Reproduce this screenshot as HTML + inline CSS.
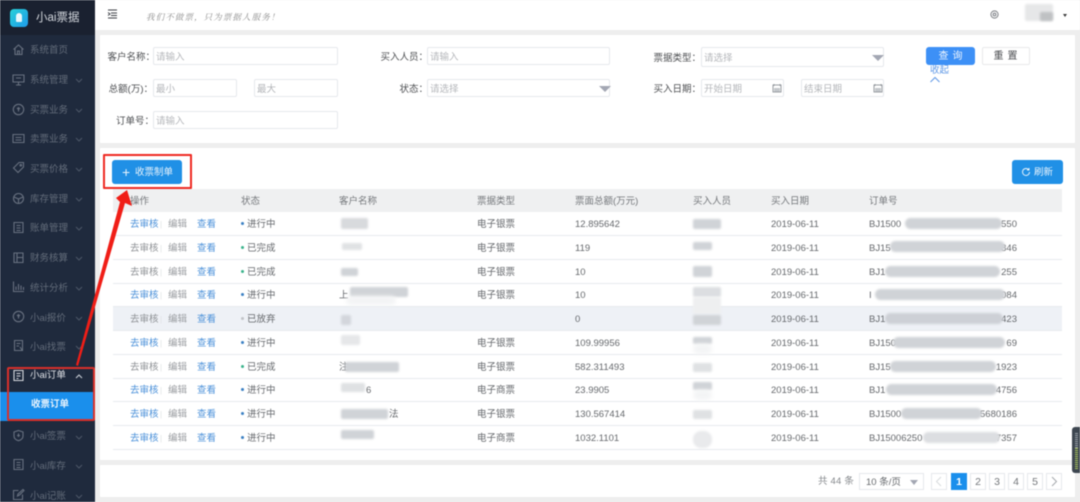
<!DOCTYPE html>
<html lang="zh">
<head>
<meta charset="utf-8">
<style>
*{box-sizing:border-box;margin:0;padding:0}
html,body{width:1080px;height:502px;overflow:hidden;background:#eeeeee}
body{position:relative;font-family:"Liberation Sans","Noto Sans CJK SC",sans-serif;font-size:9.5px;color:#5f6266}
#w{position:absolute;left:0;top:0;width:1080px;height:502px;filter:blur(.4px)}
.a,.a *{position:absolute}
.a{left:0;top:0}
.t{position:absolute;white-space:nowrap}
.panel{position:absolute;background:#fff}
.side{position:absolute;left:0;top:0;width:95px;height:502px;background:#1f2a3d}
.logo{position:absolute;left:0;top:0;width:95px;height:35px;background:#1a2130}
.m{position:absolute;left:30px;margin-top:2px;color:#636c7a;font-size:9.5px;line-height:14px;white-space:nowrap}
.i{position:absolute;left:12px;width:13px;height:13px;fill:none;stroke:#687180;stroke-width:1.1}
.ch{position:absolute;left:75px;width:8px;height:5px;fill:none;stroke:#4c5666;stroke-width:1.1}
.in{position:absolute;height:18px;border:1px solid #e6e8ec;border-radius:2px;background:#fff;color:#b4b6ba;font-size:9.5px;line-height:19px;padding-left:2px;white-space:nowrap}
.lb{position:absolute;text-align:right;font-size:9.5px;color:#4d4f52;line-height:21px;white-space:nowrap}
.tri{position:absolute;width:0;height:0;border-left:6px solid transparent;border-right:6px solid transparent;border-top:6px solid #a3a7b3}
.th{position:absolute;top:189px;line-height:25px;color:#75787c;white-space:nowrap}
.r{position:absolute;left:113px;width:949px;height:24px;border-bottom:1px solid #e7eaee;line-height:23px;white-space:nowrap;color:#66696d}
.r span{position:absolute;top:1px}
.l{color:#4a90d9}.g{color:#8e9195}.e{color:#9a9da1}
.sp{color:#dfe1e4;font-size:8px}
.o1{left:17px}.o2{left:55px}.o3{left:84px}.s1{left:47px}.s2{left:49px}
.d{position:absolute;left:128px;top:10px;width:3px;height:3px;border-radius:50%}
.st{left:134px}.cu{left:226px}.ty{left:364px}.am{left:462px}.dt{left:658px}.od{left:756px}.ode{right:45px}
.b{position:absolute;background:#d0d3d7;filter:blur(1.1px);border-radius:2px}
.b2{position:absolute;background:#f3f4f5;filter:blur(2px);border-radius:6px}
.pg{position:absolute;top:473px;width:16px;height:17px;border:1px solid #e6e8ec;text-align:center;line-height:17px;font-size:10.5px;color:#74777b;background:#fff}
</style>
</head>
<body>
<div id="w">
<div class="panel" style="left:95px;top:0;width:985px;height:30px"></div>
<svg class="a" style="left:107px;top:8px" width="12" height="12" viewBox="0 0 12 12" fill="none" stroke="#3b3f45" stroke-width="1"><path d="M1 2h9M4 5h6M4 8h0M1 10h9M4 7.5h6M1 4.5l2 1.5-2 1.5"/></svg>
<div class="t" style="left:146px;top:10px;font:italic 8.5px/14px 'Noto Serif CJK SC',serif;letter-spacing:1.1px;color:#8c8c8c">我们不做票，只为票据人服务！</div>
<svg class="a" style="left:990px;top:10px" width="9" height="9" viewBox="0 0 9 9" fill="none" stroke="#7c7f84" stroke-width="1"><circle cx="4.5" cy="4.5" r="3.6"/><circle cx="4.5" cy="4.5" r="1.4"/></svg>
<div class="b" style="left:1025px;top:4px;width:28px;height:17px;background:#e6e7e8"></div>
<div class="b" style="left:1040px;top:12px;width:13px;height:9px;background:#bfc1c3"></div>
<div class="a" style="left:1063px;top:14px;width:0;height:0;border-left:2.5px solid transparent;border-right:2.5px solid transparent;border-top:3px solid #3a3a3a"></div>

<!-- sidebar -->
<div class="side"></div>
<div class="logo"></div>
<div class="a" style="left:10px;top:9px;width:18px;height:18px;border-radius:4px;background:linear-gradient(135deg,#27d1d8,#1f9bea)"></div>
<div class="a" style="left:16px;top:13px;width:6px;height:9px;border-radius:3px 3px 1px 1px;background:#e8f7fb"></div>
<div class="t" style="left:36px;top:10px;color:#d4d8de;font-size:11.5px;line-height:16px">小ai票据</div>

<svg class="i" style="top:43px" viewBox="0 0 13 13"><path d="M1.5 6.5 6.5 2l5 4.500M3 5.500V11.500h7V5.500M5.500 11.500V8h2v3.500"/></svg>
<div class="m" style="top:42px">系统首页</div>
<svg class="i" style="top:73px" viewBox="0 0 13 13"><path d="M1 2h11v7H1zM6.500 9v3M4 12h5M4 5h5"/></svg>
<div class="m" style="top:72px">系统管理</div>
<svg class="ch" style="top:78px" viewBox="0 0 8 5"><path d="M1 1l3 3 3-3"/></svg>
<svg class="i" style="top:103px" viewBox="0 0 13 13"><circle cx="6.500" cy="6.500" r="5.200"/><path d="M6.500 4v4.500M5 5l1.500 1.500L8 5"/></svg>
<div class="m" style="top:102px">买票业务</div>
<svg class="ch" style="top:108px" viewBox="0 0 8 5"><path d="M1 1l3 3 3-3"/></svg>
<svg class="i" style="top:132px" viewBox="0 0 13 13"><path d="M1 2.500h11v8H1zM3.500 5.500h6M3.500 8h6"/></svg>
<div class="m" style="top:131px">卖票业务</div>
<svg class="ch" style="top:137px" viewBox="0 0 8 5"><path d="M1 1l3 3 3-3"/></svg>
<svg class="i" style="top:161px" viewBox="0 0 13 13"><path d="M7 1.500h4.500V6L6 11.500 1.500 7z"/><circle cx="8.800" cy="4.200" r=".8"/></svg>
<div class="m" style="top:161px">买票价格</div>
<svg class="ch" style="top:167px" viewBox="0 0 8 5"><path d="M1 1l3 3 3-3"/></svg>
<svg class="i" style="top:192px" viewBox="0 0 13 13"><circle cx="6.500" cy="6.500" r="5"/><path d="M2 5l4.500 2L11 5M6.500 7v4.500"/></svg>
<div class="m" style="top:191px">库存管理</div>
<svg class="ch" style="top:197px" viewBox="0 0 8 5"><path d="M1 1l3 3 3-3"/></svg>
<svg class="i" style="top:221px" viewBox="0 0 13 13"><path d="M2 1.500h9v10H2zM4.500 4.500h4M4.500 7h4M4.500 9.500h4"/></svg>
<div class="m" style="top:220px">账单管理</div>
<svg class="ch" style="top:226px" viewBox="0 0 8 5"><path d="M1 1l3 3 3-3"/></svg>
<svg class="i" style="top:251px" viewBox="0 0 13 13"><path d="M2 2h9v9.500H2zM5 2v9.500M5 6.500h6"/></svg>
<div class="m" style="top:250px">财务核算</div>
<svg class="ch" style="top:256px" viewBox="0 0 8 5"><path d="M1 1l3 3 3-3"/></svg>
<svg class="i" style="top:280px" viewBox="0 0 13 13"><path d="M1.500 1.500v10h10.500M4 10V6.500M6.500 10V4M9 10V5.500M11.500 10V7"/></svg>
<div class="m" style="top:280px">统计分析</div>
<svg class="ch" style="top:286px" viewBox="0 0 8 5"><path d="M1 1l3 3 3-3"/></svg>
<svg class="i" style="top:310px" viewBox="0 0 13 13"><circle cx="6.500" cy="6.500" r="5.200"/><path d="M6.500 4v4.500M5 5l1.500 1.500L8 5"/></svg>
<div class="m" style="top:310px">小ai报价</div>
<svg class="ch" style="top:316px" viewBox="0 0 8 5"><path d="M1 1l3 3 3-3"/></svg>
<svg class="i" style="top:339px" viewBox="0 0 13 13"><path d="M2.500 1.500h8v10h-8zM4.500 4.500h4M4.500 7h2.500M8 8l2 3"/></svg>
<div class="m" style="top:339px">小ai找票</div>
<svg class="ch" style="top:345px" viewBox="0 0 8 5"><path d="M1 1l3 3 3-3"/></svg>

<svg class="i" style="top:369px;stroke:#d6d9de" viewBox="0 0 13 13"><path d="M2 1.500h9v10H2zM4.500 4.500h4M4.500 7h4M4.500 9.500h2"/></svg>
<div class="m" style="top:367px;color:#dfe2e7">小ai订单</div>
<svg class="ch" style="top:374px;stroke:#c9ced6" viewBox="0 0 8 5"><path d="M1 4l3-3 3 3"/></svg>
<div class="a" style="left:0;top:392px;width:94px;height:29px;background:#1a8fec"></div>
<div class="m" style="left:31px;top:396px;color:#e9f4fd;font-weight:bold">收票订单</div>
<svg class="i" style="top:429px" viewBox="0 0 13 13"><path d="M6.500 1.500l4.500 1.500v4c0 2.500-2 4-4.500 4.700C4 11 2 9.500 2 7V3zM6.500 4.500v3.500M5 6.500h3"/></svg>
<div class="m" style="top:428px">小ai签票</div>
<svg class="ch" style="top:435px" viewBox="0 0 8 5"><path d="M1 1l3 3 3-3"/></svg>
<svg class="i" style="top:458px" viewBox="0 0 13 13"><path d="M2 1.500h9v10H2zM4.500 4.500h4M4.500 7h4M4.500 9.500h4"/></svg>
<div class="m" style="top:458px">小ai库存</div>
<svg class="ch" style="top:464px" viewBox="0 0 8 5"><path d="M1 1l3 3 3-3"/></svg>
<svg class="i" style="top:488px" viewBox="0 0 13 13"><path d="M10.500 6.500v5h-9v-9h5M5.500 8l.5-2L11 1.500l1 1L7.500 7z"/></svg>
<div class="m" style="top:488px">小ai记账</div>
<svg class="ch" style="top:494px" viewBox="0 0 8 5"><path d="M1 1l3 3 3-3"/></svg>

<!-- filter panel -->
<div class="panel" style="left:100px;top:35px;width:975px;height:108px"></div>
<div class="lb" style="left:100px;width:55px;top:47px">客户名称：</div>
<div class="in" style="left:153px;top:47px;width:185px">请输入</div>
<div class="lb" style="left:100px;width:53px;top:79px">总额(万)：</div>
<div class="in" style="left:153px;top:79px;width:84px">最小</div>
<div class="in" style="left:254px;top:79px;width:84px">最大</div>
<div class="lb" style="left:100px;width:54px;top:111px">订单号：</div>
<div class="in" style="left:153px;top:111px;width:185px">请输入</div>
<div class="lb" style="left:370px;width:58px;top:47px">买入人员：</div>
<div class="in" style="left:427px;top:47px;width:183px">请输入</div>
<div class="lb" style="left:370px;width:58px;top:79px">状态：</div>
<div class="in" style="left:427px;top:79px;width:183px">请选择</div>
<div class="tri" style="left:599px;top:86px"></div>
<div class="lb" style="left:640px;width:61px;top:48px">票据类型：</div>
<div class="in" style="left:701px;top:47px;width:183px;height:20px;line-height:21px">请选择</div>
<div class="tri" style="left:872px;top:55px"></div>
<div class="lb" style="left:640px;width:61px;top:79px">买入日期：</div>
<div class="in" style="left:701px;top:79px;width:83px">开始日期</div>
<div class="in" style="left:801px;top:79px;width:83px">结束日期</div>
<svg class="a" style="left:772px;top:83px" width="10" height="10" viewBox="0 0 10 10"><path d="M1 2h8v7H1z" fill="none" stroke="#9a9ea3"/><path d="M2 1v2M8 1v2" stroke="#9a9ea3"/><rect x="2" y="5" width="6" height="3.500" fill="#c4c7cb"/></svg>
<svg class="a" style="left:873px;top:83px" width="10" height="10" viewBox="0 0 10 10"><path d="M1 2h8v7H1z" fill="none" stroke="#9a9ea3"/><path d="M2 1v2M8 1v2" stroke="#9a9ea3"/><rect x="2" y="5" width="6" height="3.500" fill="#c4c7cb"/></svg>
<div class="a" style="left:926px;top:47px;width:49px;height:18px;border-radius:3px;background:#3d90f6;color:#eef5fe;font-size:10px;line-height:20px;text-align:center;letter-spacing:4px;padding-left:4px">查询</div>
<div class="a" style="left:982px;top:47px;width:48px;height:18px;border-radius:2px;border:1px solid #e8e9eb;background:#fff;color:#4a4c50;font-size:10px;line-height:18px;text-align:center;letter-spacing:4px;padding-left:3px">重置</div>
<div class="t" style="left:930px;top:64px;color:#5f98e6;font-size:9.5px;line-height:13px">收起</div>
<svg class="a" style="left:929px;top:76px" width="12" height="7" viewBox="0 0 12 7" fill="none" stroke="#5f98e6" stroke-width="1"><path d="M1.500 6 6 1.500 10.500 6"/></svg>

<!-- table panel -->
<div class="panel" style="left:100px;top:148px;width:975px;height:312px"></div>
<div class="a" style="left:112px;top:160px;width:70px;height:24px;border-radius:3px;background:#2090e6;color:#e8f3fc;font-size:9.500px;line-height:26px;white-space:nowrap"><span style="left:10px;top:0;font-size:14px;line-height:24px">+</span><span style="left:23px;top:0">收票制单</span></div>
<div class="a" style="left:1012px;top:160px;width:51px;height:24px;border-radius:3px;background:#2090e6;color:#e8f3fc;font-size:9.500px;line-height:26px;white-space:nowrap"><span style="left:22px;top:0">刷新</span></div>
<svg class="a" style="left:1021px;top:167px" width="10" height="10" viewBox="0 0 10 10" fill="none" stroke="#e8f3fc" stroke-width="1"><path d="M8.500 5A3.500 3.500 0 1 1 7.500 2.500M8 1v2H6"/></svg>

<div class="a" style="left:113px;top:189px;width:949px;height:23px;background:#eff0f1"></div>
<div class="th" style="left:130px">操作</div>
<div class="th" style="left:241px">状态</div>
<div class="th" style="left:339px">客户名称</div>
<div class="th" style="left:477px">票据类型</div>
<div class="th" style="left:575px">票面总额(万元)</div>
<div class="th" style="left:693px">买入人员</div>
<div class="th" style="left:771px">买入日期</div>
<div class="th" style="left:869px">订单号</div>

<div class="r" style="top:212px"><span class="o1 l">去审核</span><span class="s1 sp">|</span><span class="o2 e">编辑</span><span class="o3 l">查看</span><i class="d" style="background:#3b80c4"></i><span class="st">进行中</span><span class="ty">电子银票</span><span class="am">12.895642</span><span class="dt">2019-06-11</span><span class="od">BJ1500</span><span class="ode">550</span></div>
<div class="r" style="top:236px"><span class="o1 g">去审核</span><span class="s1 sp">|</span><span class="o2 e">编辑</span><span class="o3 l">查看</span><i class="d" style="background:#3bb48c"></i><span class="st">已完成</span><span class="ty">电子银票</span><span class="am">119</span><span class="dt">2019-06-11</span><span class="od">BJ15</span><span class="ode">846</span></div>
<div class="r" style="top:260px"><span class="o1 g">去审核</span><span class="s1 sp">|</span><span class="o2 e">编辑</span><span class="o3 l">查看</span><i class="d" style="background:#3bb48c"></i><span class="st">已完成</span><span class="ty">电子银票</span><span class="am">10</span><span class="dt">2019-06-11</span><span class="od">BJ1</span><span class="ode">255</span></div>
<div class="r" style="top:283px"><span class="o1 l">去审核</span><span class="s1 sp">|</span><span class="o2 e">编辑</span><span class="o3 l">查看</span><i class="d" style="background:#3b80c4"></i><span class="st">进行中</span><span class="cu">上</span><span class="ty">电子银票</span><span class="am">10</span><span class="dt">2019-06-11</span><span class="od">I</span><span class="ode">084</span></div>
<div class="r" style="top:307px;background:#eef1f6"><span class="o1 g">去审核</span><span class="s1 sp">|</span><span class="o2 e">编辑</span><span class="o3 l">查看</span><i class="d" style="background:#c2c4c8"></i><span class="st">已放弃</span><span class="am">0</span><span class="dt">2019-06-11</span><span class="od">BJ1</span><span class="ode">423</span></div>
<div class="r" style="top:331px"><span class="o1 l">去审核</span><span class="s1 sp">|</span><span class="o2 e">编辑</span><span class="o3 l">查看</span><i class="d" style="background:#3b80c4"></i><span class="st">进行中</span><span class="ty">电子银票</span><span class="am">109.99956</span><span class="dt">2019-06-11</span><span class="od">BJ150</span><span class="ode">69</span></div>
<div class="r" style="top:355px"><span class="o1 g">去审核</span><span class="s1 sp">|</span><span class="o2 e">编辑</span><span class="o3 l">查看</span><i class="d" style="background:#3bb48c"></i><span class="st">已完成</span><span class="cu">注</span><span class="ty">电子银票</span><span class="am">582.311493</span><span class="dt">2019-06-11</span><span class="od">BJ15</span><span class="ode">1923</span></div>
<div class="r" style="top:378px"><span class="o1 l">去审核</span><span class="s1 sp">|</span><span class="o2 e">编辑</span><span class="o3 l">查看</span><i class="d" style="background:#3b80c4"></i><span class="st">进行中</span><span class="cu" style="left:253px">6</span><span class="ty">电子商票</span><span class="am">23.9905</span><span class="dt">2019-06-11</span><span class="od">BJ1</span><span class="ode">4756</span></div>
<div class="r" style="top:402px"><span class="o1 l">去审核</span><span class="s1 sp">|</span><span class="o2 e">编辑</span><span class="o3 l">查看</span><i class="d" style="background:#3b80c4"></i><span class="st">进行中</span><span class="cu" style="left:276px">法</span><span class="ty">电子银票</span><span class="am">130.567414</span><span class="dt">2019-06-11</span><span class="od">BJ1500</span><span class="ode">5680186</span></div>
<div class="r" style="top:426px"><span class="o1 l">去审核</span><span class="s1 sp">|</span><span class="o2 e">编辑</span><span class="o3 l">查看</span><i class="d" style="background:#3b80c4"></i><span class="st">进行中</span><span class="ty">电子商票</span><span class="am">1032.1101</span><span class="dt">2019-06-11</span><span class="od">BJ15006250</span><span class="ode">7357</span></div>

<!-- redaction smudges: customer -->
<div class="b" style="left:341px;top:218px;width:27px;height:11px;background:#d8dadd"></div>
<div class="b" style="left:342px;top:243px;width:20px;height:7px;background:#e0e2e4"></div>
<div class="b" style="left:341px;top:268px;width:17px;height:8px"></div>
<div class="b" style="left:350px;top:287px;width:58px;height:10px"></div>
<div class="b2" style="left:346px;top:296px;width:50px;height:9px"></div>
<div class="b" style="left:341px;top:315px;width:10px;height:10px;background:#d3d6dc"></div>
<div class="b" style="left:341px;top:335px;width:19px;height:10px;background:#e6e7e9"></div>
<div class="b" style="left:345px;top:362px;width:54px;height:10px"></div>
<div class="b" style="left:341px;top:383px;width:24px;height:9px;background:#dfe1e3"></div>
<div class="b" style="left:341px;top:409px;width:47px;height:10px"></div>
<div class="b" style="left:341px;top:430px;width:33px;height:9px"></div>
<!-- buyer -->
<div class="b" style="left:693px;top:219px;width:28px;height:10px"></div>
<div class="b" style="left:693px;top:242px;width:19px;height:8px"></div>
<div class="b" style="left:693px;top:266px;width:19px;height:11px"></div>
<div class="b" style="left:693px;top:287px;width:28px;height:10px;background:#dcdee1"></div>
<div class="b" style="left:693px;top:297px;width:28px;height:17px;background:#eeeff0"></div>
<div class="b" style="left:693px;top:315px;width:28px;height:10px"></div>
<div class="b" style="left:693px;top:337px;width:19px;height:7px"></div>
<div class="b2" style="left:693px;top:344px;width:19px;height:10px"></div>
<div class="b" style="left:693px;top:363px;width:19px;height:9px;background:#dfe1e3"></div>
<div class="b" style="left:693px;top:382px;width:19px;height:8px"></div>
<div class="b2" style="left:693px;top:390px;width:19px;height:10px"></div>
<div class="b" style="left:693px;top:410px;width:19px;height:9px;background:#dfe1e3"></div>
<div class="b" style="left:693px;top:431px;width:19px;height:17px;background:#e9eaec;border-radius:8px"></div>
<!-- order -->
<div class="b" style="left:905px;top:218px;width:97px;height:11px;border-radius:6px"></div>
<div class="b" style="left:890px;top:241px;width:115px;height:11px;border-radius:6px"></div>
<div class="b" style="left:885px;top:266px;width:115px;height:11px;border-radius:6px"></div>
<div class="b" style="left:875px;top:289px;width:130px;height:11px;border-radius:6px"></div>
<div class="b" style="left:885px;top:313px;width:118px;height:11px;border-radius:6px;background:#cdd0d6"></div>
<div class="b" style="left:893px;top:337px;width:112px;height:11px;border-radius:6px"></div>
<div class="b" style="left:890px;top:361px;width:106px;height:11px;border-radius:6px"></div>
<div class="b" style="left:886px;top:384px;width:111px;height:11px;border-radius:6px"></div>
<div class="b" style="left:901px;top:408px;width:81px;height:11px;border-radius:6px"></div>
<div class="b" style="left:923px;top:432px;width:77px;height:11px;border-radius:6px;background:#dcdee1"></div>

<!-- pagination -->
<div class="panel" style="left:100px;top:465px;width:975px;height:32px"></div>
<div class="t" style="left:818px;top:475px;line-height:14px;color:#85888c;letter-spacing:.2px">共 44 条</div>
<div class="a" style="left:859px;top:473px;width:65px;height:17px;border:1px solid #e6e8ec;background:#fff;color:#66696d;line-height:17px;padding-left:6px;white-space:nowrap">10 条/页</div>
<div class="tri" style="left:910px;top:480px;border-left-width:4.500px;border-right-width:4.500px;border-top-width:5px"></div>
<div class="pg" style="left:931px"></div>
<svg class="a" style="left:935px;top:476px" width="8" height="11" viewBox="0 0 8 11" fill="none" stroke="#d8dadd" stroke-width="1"><path d="M6 1 1.500 5.500 6 10"/></svg>
<div class="pg" style="left:951px;background:#1a8fec;border-color:#1a8fec;color:#fff;font-weight:bold">1</div>
<div class="pg" style="left:970px">2</div>
<div class="pg" style="left:989px">3</div>
<div class="pg" style="left:1008px">4</div>
<div class="pg" style="left:1027px">5</div>
<div class="pg" style="left:1046px"></div>
<svg class="a" style="left:1050px;top:476px" width="8" height="11" viewBox="0 0 8 11" fill="none" stroke="#a6a9ad" stroke-width="1"><path d="M2 1l4.500 4.500L2 10"/></svg>

<!-- side widget -->
<div class="a" style="left:1072px;top:427px;width:8px;height:46px;border-radius:3px 0 0 3px;background:#3d4650"></div>
<div class="a" style="left:1075px;top:433px;width:3px;height:15px;background:repeating-linear-gradient(#9aa1a8 0 1px,#3d4650 1px 2px)"></div>
<div class="a" style="left:1075px;top:448px;width:3px;height:21px;background:repeating-linear-gradient(#a8c45a 0 1px,#3d4650 1px 2px)"></div>

<!-- red annotations -->
<div class="a" style="left:103px;top:154px;width:89px;height:35px;border:2px solid #ee2a22;border-radius:1px"></div>
<div class="a" style="left:7px;top:367px;width:88px;height:54px;border:2px solid #d9302a;border-radius:2px"></div>
<svg class="a" style="left:0;top:0" width="200" height="380" viewBox="0 0 200 380"><polygon points="127,190 132,206 125,203 78,366 76,365 120,202 116,198" fill="#f01e17"/></svg>
</div>
</body>
</html>
